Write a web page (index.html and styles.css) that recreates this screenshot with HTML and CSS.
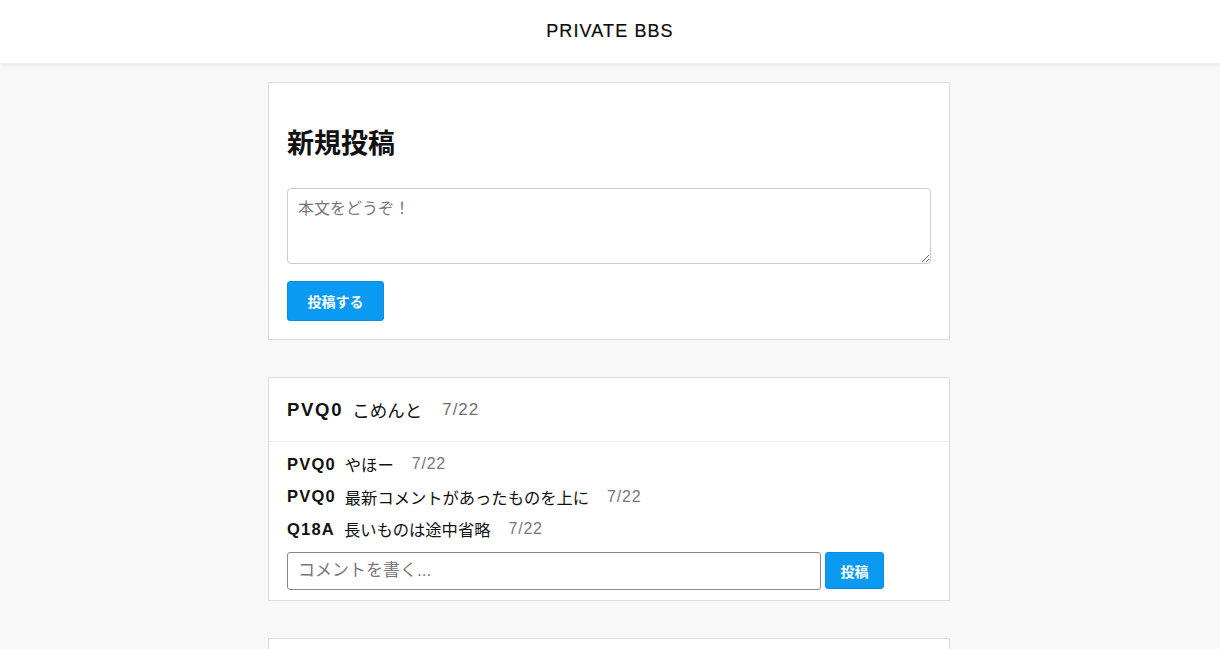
FILE: index.html
```html
<!DOCTYPE html>
<html lang="ja">
<head>
<meta charset="utf-8">
<title>PRIVATE BBS</title>
<link rel="stylesheet" href="styles.css">
</head>
<body>
<header class="header">PRIVATE BBS</header>
<main class="main">
  <section class="card new-post">
    <h2 class="new-title">新規投稿</h2>
    <textarea class="post-text" placeholder="本文をどうぞ！"></textarea>
    <button class="btn btn-post">投稿する</button>
  </section>

  <section class="card thread">
    <div class="thread-head">
      <span class="name name-lg">PVQ0</span>
      <span class="body body-lg">こめんと</span>
      <span class="date date-lg">7/22</span>
    </div>
    <div class="thread-body">
      <div class="comment"><span class="name">PVQ0</span><span class="body">やほー</span><span class="date">7/22</span></div>
      <div class="comment"><span class="name">PVQ0</span><span class="body">最新コメントがあったものを上に</span><span class="date">7/22</span></div>
      <div class="comment"><span class="name">Q18A</span><span class="body">長いものは途中省略</span><span class="date">7/22</span></div>
      <form class="comment-form">
        <input class="comment-input" type="text" placeholder="コメントを書く...">
        <button class="btn btn-comment" type="button">投稿</button>
      </form>
    </div>
  </section>

  <section class="card thread"></section>
</main>
</body>
</html>
```

FILE: styles.css
```css
* { box-sizing: border-box; }
html, body {
  margin: 0;
  padding: 0;
  background: #f8f8f8;
  font-family: "Liberation Sans", "Noto Sans CJK JP", sans-serif;
  color: #111;
}
.header {
  height: 64px;
  background: #fff;
  display: flex;
  align-items: center;
  justify-content: center;
  font-size: 18px;
  letter-spacing: 1.1px;
  color: #0a0a0a;
  -webkit-text-stroke: 0.2px #0a0a0a;
  box-shadow: 0 1px 3px rgba(0,0,0,0.08);
  border-bottom: 1px solid #eee;
}
.main {
  width: 682px;
  margin: 18px 0 0 calc(50% - 342px);
  display: flex;
  flex-direction: column;
  gap: 37px;
}
.card {
  background: #fff;
  border: 1px solid #ddd;
}
.new-post {
  padding: 40px 18px 18px;
  display: flex;
  flex-direction: column;
  align-items: flex-start;
}
.new-title {
  margin: 0 0 23px;
  font-size: 27px;
  font-weight: bold;
  line-height: 42px;
}
.post-text {
  width: 644px;
  height: 76px;
  border: 1px solid #ccc;
  border-radius: 4px;
  padding: 6px 10px;
  font-family: inherit;
  font-size: 16px;
  resize: vertical;
  display: block;
}
.post-text::placeholder { color: #777; }
.btn {
  background: #0a9af2;
  color: #fff;
  border: 1px solid #0a8ee0;
  border-radius: 3px;
  font-family: inherit;
  font-weight: bold;
  font-size: 14px;
  cursor: pointer;
}
.btn-post {
  margin-top: 17px;
  width: 97px;
  height: 40px;
}
.thread { min-height: 40px; }
.thread-head {
  height: 64px;
  display: flex;
  align-items: center;
  padding: 0 18px;
  border-bottom: 1px solid #eee;
}
.thread-body {
  padding: 6px 18px 10px;
}
.comment {
  height: 32.5px;
  display: flex;
  align-items: center;
}
.name {
  font-weight: bold;
  font-size: 16.5px;
  letter-spacing: 1.2px;
  margin-right: 9px;
}
.name-lg { font-size: 18.5px; letter-spacing: 1.7px; margin-right: 9px; }
.body { font-size: 16.3px; margin-right: 18px; }
.body-lg { font-size: 17.5px; margin-right: 20px; }
.date { color: #777; font-size: 16px; letter-spacing: 0.8px; }
.date-lg { font-size: 17px; letter-spacing: 1px; color: #707070; }
.comment-form {
  margin: 6px 0 0;
  display: flex;
  align-items: center;
  gap: 4px;
}
.comment-input {
  width: 534px;
  height: 38px;
  border: 1px solid #888;
  border-radius: 3px;
  padding: 0 10px;
  font-family: inherit;
  font-size: 17px;
}
.comment-input::placeholder { color: #777; }
.btn-comment {
  width: 59px;
  height: 37px;
}
```
